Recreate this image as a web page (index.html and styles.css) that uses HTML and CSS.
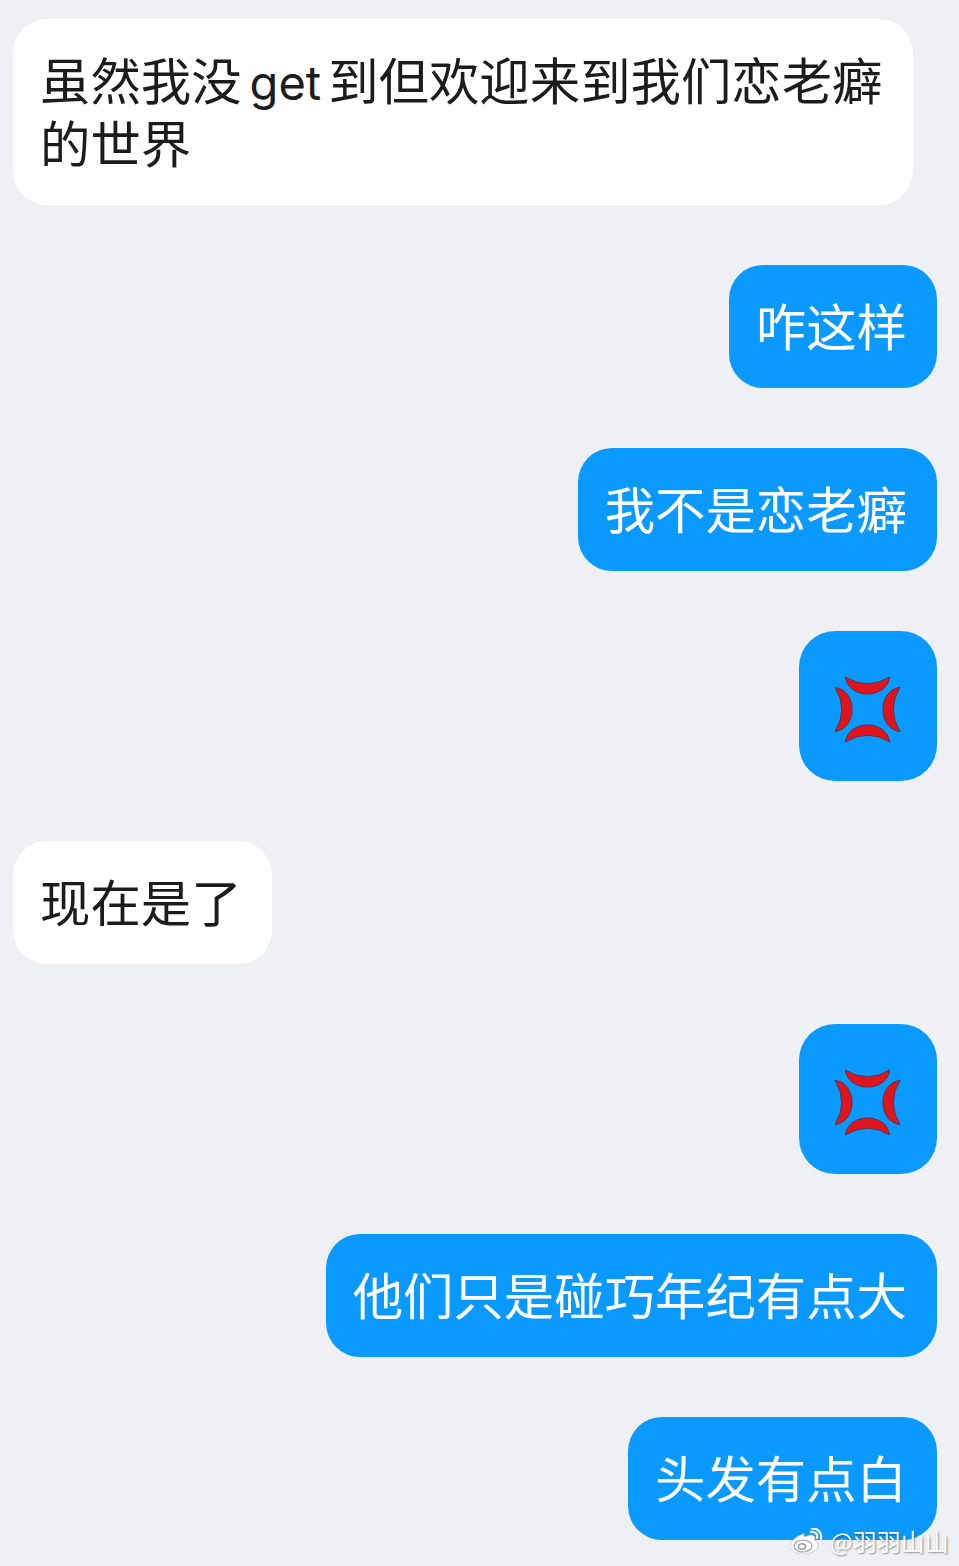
FILE: index.html
```html
<!DOCTYPE html>
<html>
<head>
	<meta charset="utf-8">
	<title></title>
	<link rel="stylesheet" href="styles.css">
</head>
<body>
	<svg class="defs" width="0" height="0">
		<symbol id="anger" viewBox="0 0 67 67">
			<g fill="#e0141c" stroke="#5f2a3a" stroke-width="0.9" stroke-linejoin="round">
				<path d="M12 2Q33.500 15 55 2C52 24 15 24 12 2Z"/>
				<path d="M12 2Q33.500 15 55 2C52 24 15 24 12 2Z" transform="rotate(90 33.500 33.500)"/>
				<path d="M12 2Q33.500 15 55 2C52 24 15 24 12 2Z" transform="rotate(180 33.500 33.500)"/>
				<path d="M12 2Q33.500 15 55 2C52 24 15 24 12 2Z" transform="rotate(270 33.500 33.500)"/>
			</g>
		</symbol>
	</svg>
	<div class="chat">
		<div class="msg them first">虽然我没<span class="latin">get</span>到但欢迎来到我们恋老癖<br>的世界</div>
		<div class="msg me">咋这样</div>
		<div class="msg me">我不是恋老癖</div>
		<div class="msg me emoji"><svg class="anger"><use href="#anger"/></svg></div>
		<div class="msg them">现在是了</div>
		<div class="msg me emoji"><svg class="anger"><use href="#anger"/></svg></div>
		<div class="msg me">他们只是碰巧年纪有点大</div>
		<div class="msg me">头发有点白</div>
	</div>
	<!-- 水印 -->
	<div class="mark">
		<svg class="mark-logo" viewBox="0 0 36 26">
			<path d="M13 6C6 8 0 14 0 18c0 5 7 8 13 8 9 0 15-4 15-9 0-3-3-4-3-4-1 0 0-2 0-3 0-3-4-4-8-2-2 1-3 1-3 0 0-2 0-3-1-2Z" fill="#fff" stroke="#b5b5b5" stroke-width="0.6"/>
			<ellipse cx="13" cy="18" rx="9" ry="6" fill="#fafafa" stroke="#a5a5a5" stroke-width="1.200"/>
			<ellipse cx="12" cy="18.500" rx="3.500" ry="2.800" fill="none" stroke="#999" stroke-width="1.400"/>
			<path d="M21 4c4-1 7 2 6 6M22 0.800c6-1 10 4 9 10" fill="none" stroke="#fff" stroke-width="2.200" stroke-linecap="round"/>
		</svg>
		<span class="mark-name">@羽羽山山</span>
	</div>
</body>
</html>
```

FILE: styles.css
```css
html, body {
	margin: 0;
	padding: 0;
}
body {
	position: relative;
	height: 1566px;
	overflow: hidden;
	background: #eff0f3;
	font-family: "Noto Sans CJK SC", "Noto Sans", sans-serif;
}
.defs {
	display: block;
	height: 0;
}
.chat {
	display: flex;
	flex-direction: column;
	gap: 60px;
	padding: 19px 22px 0 13px;
}
.msg {
	padding: 28px 30px 32px 27px;
	border-radius: 34px;
	font-size: 50.400px;
	line-height: 63px;
	white-space: nowrap;
}
.them {
	align-self: flex-start;
	background: #fff;
	color: #1c1c1e;
}
.first {
	width: 843px;
}
.me {
	align-self: flex-end;
	background: #0a99ff;
	color: #fff;
}
.latin {
	margin: 0 7px 0 8px;
	font-family: Inter, "Liberation Sans", sans-serif;
	font-size: 47px;
	font-weight: 400;
	line-height: 1;
}
.emoji {
	display: flex;
	padding: 44px 35px 37px 34px;
	border-radius: 36px;
}
.anger {
	width: 69px;
	height: 69px;
}
.mark {
	position: absolute;
	left: 790px;
	top: 1528px;
	display: flex;
	align-items: flex-start;
	gap: 4px;
}
.mark-logo {
	width: 36px;
	height: 26px;
}
.mark-name {
	color: #fff;
	font-size: 24px;
	line-height: 26px;
	text-shadow: 1px 1px 2px rgba(0,0,0,.45);
	white-space: nowrap;
}
```
